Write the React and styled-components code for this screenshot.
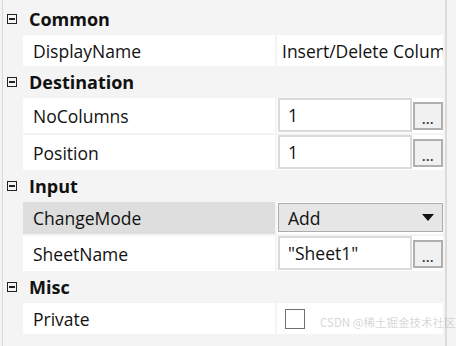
import React from 'react';
import styled, { createGlobalStyle } from 'styled-components';

const GlobalStyle = createGlobalStyle`
  html, body {
    margin: 0;
    padding: 0;
    background: #f4f4f4;
  }
  body {
    font-family: "Open Sans", "Noto Sans", "Noto Sans CJK SC", sans-serif;
    color: #111;
  }
`;

const Frame = styled.div`
  position: relative;
  width: 456px;
  height: 346px;
  overflow: hidden;
  background: #f4f4f4;
`;

const Panel = styled.div`
  margin-left: 2px;
  width: 445px;
  height: 346px;
  padding-top: 3px;
  box-sizing: border-box;
  border-left: 1px solid #d9d9d9;
  border-right: 2px solid #dcdcdc;
  display: flex;
  flex-direction: column;
`;

const CategoryRow = styled.div`
  height: 32px;
  display: flex;
  align-items: center;
  gap: 4px;
  padding-left: 4px;
  font-weight: 700;
  font-size: 18px;
`;

const Toggle = styled.span`
  width: 8px;
  height: 8px;
  border: 1px solid #222;
  display: flex;
  align-items: center;
  justify-content: center;
  margin-right: 8px;
  &::after {
    content: '';
    width: 6px;
    height: 2px;
    background: #222;
  }
`;

const PropRow = styled.div`
  height: ${(p) => p.$h}px;
  margin-top: ${(p) => p.$gap}px;
  margin-left: 20px;
  margin-right: 2px;
  display: grid;
  grid-template-columns: 252px 1fr;
  column-gap: 2px;
`;

const NameCell = styled.div`
  background: ${(p) => (p.$selected ? '#dedede' : '#fff')};
  display: flex;
  align-items: center;
  padding-left: 10px;
  font-size: 17.5px;
  white-space: nowrap;
`;

const ValueCell = styled.div`
  background: #fff;
  display: flex;
  align-items: center;
  gap: 1px;
  padding-left: ${(p) => (p.$text ? 5 : 1)}px;
  font-size: 17.5px;
  white-space: nowrap;
  overflow: hidden;
`;

const EditBox = styled.div`
  flex: 1;
  align-self: stretch;
  margin: 0 0 1px;
  border: 2px solid #dadada;
  background: #fff;
  display: flex;
  align-items: center;
  padding-left: 8px;
`;

const DotsButton = styled.div`
  width: 26px;
  height: 24px;
  border: 2px solid #b0b0b0;
  background: #f1f1f1;
  display: flex;
  align-items: flex-end;
  justify-content: center;
  font-size: 12px;
  line-height: 16px;
  font-weight: 700;
  letter-spacing: 0.5px;
  color: #333;
`;

const Dropdown = styled.div`
  flex: 1;
  align-self: stretch;
  margin: 1px 0 2px;
  border: 1px solid #acacac;
  background: #e6e6e6;
  display: flex;
  align-items: center;
  justify-content: space-between;
  padding: 0 8px 0 9px;
`;

const Arrow = styled.span`
  width: 0;
  height: 0;
  border-left: 6px solid transparent;
  border-right: 6px solid transparent;
  border-top: 7px solid #111;
`;

const CheckBox = styled.span`
  width: 18px;
  height: 18px;
  border: 1px solid #707070;
  background: #fff;
  margin-left: 7px;
`;

const Watermark = styled.div`
  position: absolute;
  left: 320px;
  top: 314px;
  font-size: 11.5px;
  color: rgba(150, 150, 150, 0.4);
  font-family: "Noto Sans CJK SC", "Noto Sans", sans-serif;
  white-space: nowrap;
`;

const Category = ({ title }) => (
  <CategoryRow>
    <Toggle />
    {title}
  </CategoryRow>
);

const TextEditor = ({ value }) => (
  <>
    <EditBox>{value}</EditBox>
    <DotsButton>...</DotsButton>
  </>
);

export default function App() {
  return (
    <Frame>
      <GlobalStyle />
      <Panel>
        <Category title="Common" />
        <PropRow $h={31} $gap={0}>
          <NameCell>DisplayName</NameCell>
          <ValueCell $text>Insert/Delete Columns</ValueCell>
        </PropRow>

        <Category title="Destination" />
        <PropRow $h={35} $gap={0}>
          <NameCell>NoColumns</NameCell>
          <ValueCell>
            <TextEditor value="1" />
          </ValueCell>
        </PropRow>
        <PropRow $h={35} $gap={2}>
          <NameCell>Position</NameCell>
          <ValueCell>
            <TextEditor value="1" />
          </ValueCell>
        </PropRow>

        <Category title="Input" />
        <PropRow $h={32} $gap={0}>
          <NameCell $selected>ChangeMode</NameCell>
          <ValueCell>
            <Dropdown>
              Add
              <Arrow />
            </Dropdown>
          </ValueCell>
        </PropRow>
        <PropRow $h={35} $gap={2}>
          <NameCell>SheetName</NameCell>
          <ValueCell>
            <TextEditor value={'"Sheet1"'} />
          </ValueCell>
        </PropRow>

        <Category title="Misc" />
        <PropRow $h={31} $gap={0}>
          <NameCell>Private</NameCell>
          <ValueCell>
            <CheckBox />
          </ValueCell>
        </PropRow>
      </Panel>
      <Watermark>CSDN @稀土掘金技术社区</Watermark>
    </Frame>
  );
}
